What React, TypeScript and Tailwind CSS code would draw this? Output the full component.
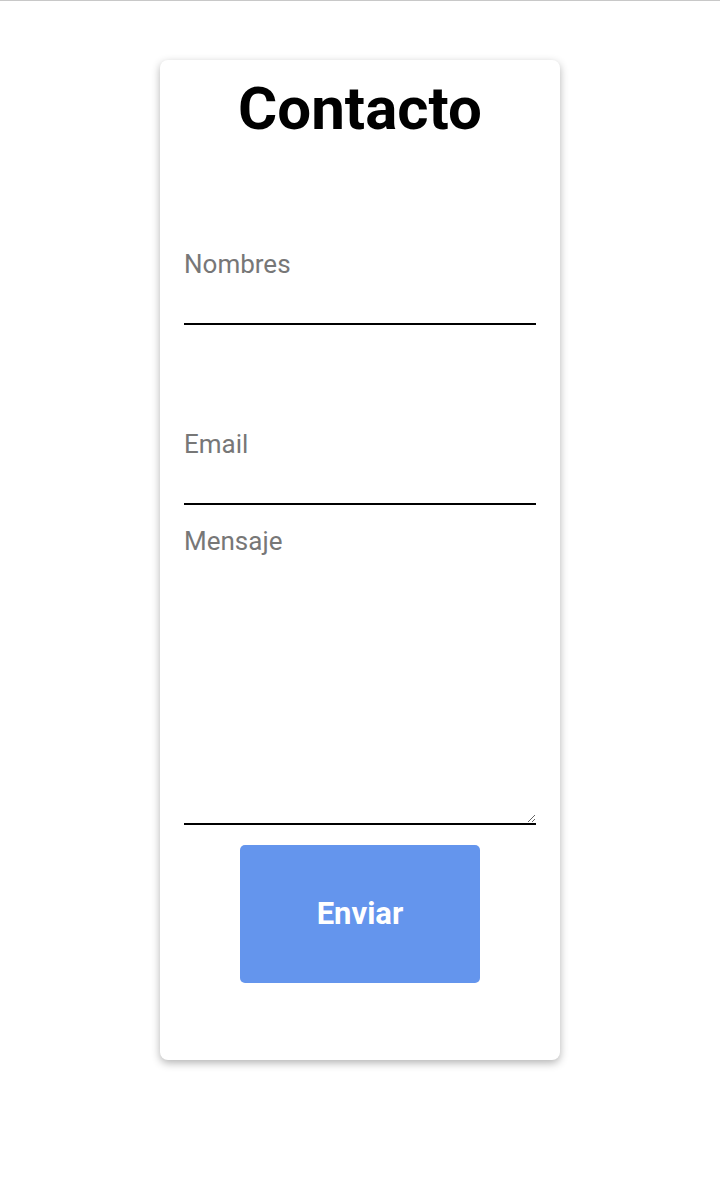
export default function App() {
  return (
    <div className="min-h-[1204px] w-full border-t border-[#c8c8c8] bg-white font-['Roboto',sans-serif]">
      <div className="mx-auto mt-[59px] flex h-[1000px] w-[400px] flex-col rounded-lg bg-white px-6 shadow-[0_3px_8px_rgba(0,0,0,0.3)]">
        <h1 className="mt-[14px] text-center text-[60px] font-bold leading-[70px] text-black">Contacto</h1>
        <form className="flex flex-col" onSubmit={(e) => e.preventDefault()}>
          <input
            type="text"
            placeholder="Nombres"
            className="mt-[59px] h-[122px] w-full border-b-2 border-black bg-transparent pt-[2px] text-[26px] text-black outline-none placeholder:text-[#777777]"
          />
          <input
            type="email"
            placeholder="Email"
            className="mt-[58px] h-[122px] w-full border-b-2 border-black bg-transparent pt-[2px] text-[26px] text-black outline-none placeholder:text-[#777777]"
          />
          <textarea
            placeholder="Mensaje"
            className="mt-[18px] h-[302px] w-full border-b-2 border-black bg-transparent pt-[3px] text-[26px] leading-[30px] text-black outline-none placeholder:text-[#777777]"
          />
          <button
            type="submit"
            className="mx-auto mt-[20px] h-[138px] w-[240px] rounded-[5px] bg-[#6495ed] text-[31px] font-bold text-white"
          >
            Enviar
          </button>
        </form>
      </div>
    </div>
  );
}
